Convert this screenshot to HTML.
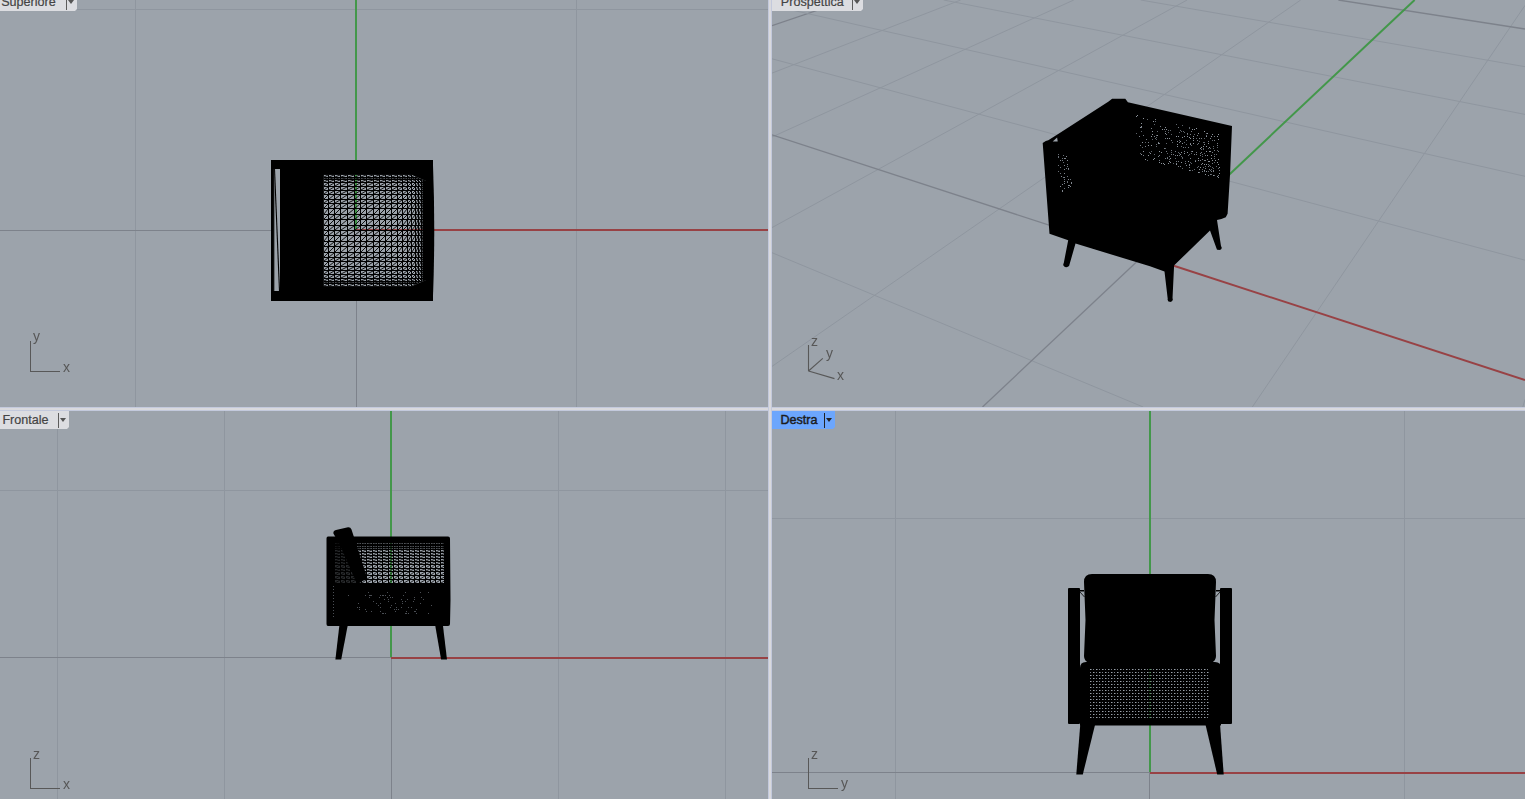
<!DOCTYPE html>
<html><head><meta charset="utf-8"><style>
html,body{margin:0;padding:0}
body{width:1525px;height:799px;position:relative;overflow:hidden;background:#d9d9dd;font-family:"Liberation Sans",sans-serif}
svg{position:absolute;left:0;top:0}
.lab{position:absolute;height:18px;box-sizing:border-box;background:#dcdde1;color:#444;font-size:12.6px;line-height:19px;white-space:nowrap;-webkit-text-stroke:0.2px #444;clip-path:polygon(0 0,100% 0,100% calc(100% - 2px),calc(100% - 2px) 100%,0 100%)}
.lab.act{background:#6ca6fd;color:#1c1c1c;-webkit-text-stroke:0.45px #1c1c1c;font-size:12.6px;line-height:19px}
.sp{position:absolute;top:2px;width:1px;height:15px;background:#5c5c5c}
.tri{position:absolute;top:7px;width:0;height:0;border-left:3.5px solid transparent;border-right:3.5px solid transparent;border-top:4px solid #555}
.act .sp{background:#222}
.act .tri{border-top-color:#222}
.ax{position:absolute;font-size:14px;line-height:14px;color:#575757;will-change:transform}
</style></head><body>
<svg width="1525" height="799">
<defs>
<clipPath id="cpP"><rect x="772" y="0" width="753" height="407"/></clipPath>
<clipPath id="cpTop"><path d="M323.5,174.5 L411,174.5 L426,181 L426,280 L411,286.5 L323.5,286.5 Z"/></clipPath>
<clipPath id="cpFront"><rect x="334" y="543" width="110" height="41"/></clipPath>
<pattern id="meshDots" x="0" y="0" width="3" height="3" patternUnits="userSpaceOnUse">
 <rect width="3" height="3" fill="#000"/><rect x="1" y="1" width="1" height="1" fill="#8c929a"/>
</pattern>
<pattern id="meshDots2" x="1089" y="668" width="6" height="6" patternUnits="userSpaceOnUse">
 <rect width="6" height="6" fill="#000"/><rect x="1" y="1" width="1" height="1" fill="#9ca3ab"/><rect x="4" y="1" width="1" height="1" fill="#7a8088"/><rect x="1" y="4" width="1" height="1" fill="#7a8088"/><rect x="4" y="4" width="1" height="1" fill="#9ca3ab"/><rect x="2" y="1" width="1" height="1" fill="#50545a"/><rect x="5" y="4" width="1" height="1" fill="#50545a"/>
</pattern>
<pattern id="meshDots4" x="0" y="0" width="4" height="4" patternUnits="userSpaceOnUse">
 <rect width="4" height="4" fill="#000"/><rect x="1" y="1" width="1" height="1" fill="#80868e"/>
</pattern>
<pattern id="meshDots3" x="0" y="0" width="6" height="5" patternUnits="userSpaceOnUse">
 <rect width="6" height="5" fill="#000"/><rect x="2" y="2" width="1" height="1" fill="#5a5f66"/>
</pattern>
</defs>
<rect x="0" y="0" width="768" height="407" fill="#9ca3ab"/>
<rect x="772" y="0" width="753" height="407" fill="#9ca3ab"/>
<rect x="0" y="411" width="768" height="388" fill="#9ca3ab"/>
<rect x="772" y="411" width="753" height="388" fill="#9ca3ab"/>
<rect x="768" y="0" width="1" height="799" fill="#c3c9dc"/>
<rect x="771" y="0" width="1" height="799" fill="#c3c9dc"/>
<rect x="0" y="407" width="1525" height="1" fill="#c3c9dc"/>
<rect x="0" y="410" width="1525" height="1" fill="#c3c9dc"/>
<rect x="769" y="407" width="2" height="4" fill="#d9d9dd"/>
<rect x="135" y="0" width="1" height="407" fill="#8f969f"/>
<rect x="576" y="0" width="1" height="407" fill="#8f969f"/>
<rect x="0" y="9" width="768" height="1" fill="#8f969f"/>
<rect x="0" y="230" width="356" height="1" fill="#7d828b"/>
<rect x="356" y="230" width="1" height="177" fill="#7d828b"/>
<rect x="356" y="229" width="412" height="2" fill="#984245"/>
<rect x="355" y="0" width="2" height="230" fill="#43974a"/>
<rect x="57" y="411" width="1" height="388" fill="#8f969f"/>
<rect x="224" y="411" width="1" height="388" fill="#8f969f"/>
<rect x="558" y="411" width="1" height="388" fill="#8f969f"/>
<rect x="725" y="411" width="1" height="388" fill="#8f969f"/>
<rect x="0" y="490" width="768" height="1" fill="#8f969f"/>
<rect x="0" y="657" width="391" height="1" fill="#7d828b"/>
<rect x="391" y="657" width="1" height="142" fill="#7d828b"/>
<rect x="391" y="657" width="377" height="2" fill="#984245"/>
<rect x="390" y="411" width="2" height="246" fill="#43974a"/>
<rect x="895" y="411" width="1" height="388" fill="#8f969f"/>
<rect x="1404" y="411" width="1" height="388" fill="#8f969f"/>
<rect x="772" y="518" width="753" height="1" fill="#8f969f"/>
<rect x="772" y="772" width="378" height="1" fill="#7d828b"/>
<rect x="1149" y="772" width="1" height="27" fill="#7d828b"/>
<rect x="1150" y="772" width="375" height="2" fill="#984245"/>
<rect x="1149" y="411" width="2" height="361" fill="#43974a"/>
<g clip-path="url(#cpP)">
<line x1="772.0" y1="25.7" x2="847.9" y2="0.0" stroke="#7d828b" stroke-width="1.3"/>
<line x1="772.0" y1="73.1" x2="960.7" y2="0.0" stroke="#8f969f" stroke-width="1"/>
<line x1="772.0" y1="137.0" x2="1073.8" y2="0.0" stroke="#8f969f" stroke-width="1"/>
<line x1="772.0" y1="227.6" x2="1187.1" y2="0.0" stroke="#8f969f" stroke-width="1"/>
<line x1="772.0" y1="366.4" x2="1300.7" y2="0.0" stroke="#8f969f" stroke-width="1"/>
<line x1="772.0" y1="252.7" x2="1143.2" y2="407.0" stroke="#8f969f" stroke-width="1"/>
<line x1="1252.3" y1="407.0" x2="1525.0" y2="5.4" stroke="#8f969f" stroke-width="1"/>
<line x1="772.0" y1="58.8" x2="1525.0" y2="260.2" stroke="#8f969f" stroke-width="1"/>
<line x1="1522.8" y1="407.0" x2="1525.0" y2="399.5" stroke="#8f969f" stroke-width="1"/>
<line x1="772.0" y1="5.5" x2="1525.0" y2="176.3" stroke="#8f969f" stroke-width="1"/>
<line x1="943.7" y1="0.0" x2="1525.0" y2="114.4" stroke="#8f969f" stroke-width="1"/>
<line x1="1140.7" y1="0.0" x2="1525.0" y2="66.7" stroke="#8f969f" stroke-width="1"/>
<line x1="1338.4" y1="-0.0" x2="1525.0" y2="29.0" stroke="#7d828b" stroke-width="1.3"/>
<line x1="1143.1" y1="255.7" x2="772.0" y2="134.9" stroke="#7d828b" stroke-width="1.3"/>
<line x1="1143.1" y1="255.7" x2="982.5" y2="407.0" stroke="#7d828b" stroke-width="1.3"/>
<line x1="1143.1" y1="255.7" x2="1525.0" y2="380.1" stroke="#984245" stroke-width="2"/>
<line x1="1143.1" y1="255.7" x2="1414.6" y2="0.0" stroke="#43974a" stroke-width="2"/>
</g>
<rect x="271" y="160" width="162" height="141" fill="#000"/>
<rect x="274" y="169" width="6" height="122" fill="#9ca3ab"/>
<path d="M274.5,169 L279.5,291" stroke="#000" stroke-width="1.1"/>
<rect x="273.6" y="169" width="0.8" height="122" fill="#222"/>
<path d="M433,165 Q435.5,230 433,296 Z" fill="#000"/>
<g clip-path="url(#cpTop)">
<rect x="323.5" y="174.8" width="102.5" height="111.5" fill="#9ca3ab"/>
<rect x="355" y="174.8" width="2" height="55.2" fill="#43974a"/>
<rect x="356" y="229" width="70" height="2" fill="#984245"/>
<path d="M323,174h1V287h-1zM328,174h1V287h-1zM334,174h1V287h-1zM340,174h1V287h-1zM347,174h1V287h-1zM354,174h1V287h-1zM360,174h1V287h-1zM366,174h1V287h-1zM373,174h1V287h-1zM379,174h1V287h-1zM385,174h1V287h-1zM391,174h1V287h-1zM397,174h1V287h-1zM402,174h1V287h-1zM407,174h1V287h-1zM411,174h1V287h-1zM415,174h1V287h-1zM418,174h1V287h-1zM421,174h1V287h-1zM423,174h1V287h-1zM424,174h1V287h-1zM425,174h1V287h-1zM426,174h1V287h-1zM323,174H427v1H323zM323,177H427v1H323zM323,179H427v1H323zM323,182H427v1H323zM323,186H427v1H323zM323,190H427v1H323zM323,194H427v1H323zM323,199H427v1H323zM323,203H427v1H323zM323,208H427v1H323zM323,214H427v1H323zM323,219H427v1H323zM323,225H427v1H323zM323,230H427v1H323zM323,235H427v1H323zM323,241H427v1H323zM323,246H427v1H323zM323,252H427v1H323zM323,257H427v1H323zM323,261H427v1H323zM323,266H427v1H323zM323,270H427v1H323zM323,274H427v1H323zM323,278H427v1H323zM323,281H427v1H323zM323,283H427v1H323zM323,286H427v1H323z" fill="#000" shape-rendering="crispEdges"/>
<path d="M324,177L328,175M324,179L328,178M324,182L328,180M324,186L328,183M324,190L328,187M324,194L328,191M324,199L328,195M324,203L328,200M324,208L328,204M324,214L328,209M324,219L328,215M324,225L328,220M324,230L328,226M324,235L328,231M324,241L328,236M324,246L328,242M324,252L328,247M324,257L328,253M324,261L328,258M324,266L328,262M324,270L328,267M324,274L328,271M324,278L328,275M324,281L328,279M324,283L328,282M324,286L328,284M329,177L334,175M329,179L334,178M329,182L334,180M329,186L334,183M329,190L334,187M329,194L334,191M329,199L334,195M329,203L334,200M329,208L334,204M329,214L334,209M329,219L334,215M329,225L334,220M329,230L334,226M329,235L334,231M329,241L334,236M329,246L334,242M329,252L334,247M329,257L334,253M329,261L334,258M329,266L334,262M329,270L334,267M329,274L334,271M329,278L334,275M329,281L334,279M329,283L334,282M329,286L334,284M335,177L340,175M335,179L340,178M335,182L340,180M335,186L340,183M335,190L340,187M335,194L340,191M335,199L340,195M335,203L340,200M335,208L340,204M335,214L340,209M335,219L340,215M335,225L340,220M335,230L340,226M335,235L340,231M335,241L340,236M335,246L340,242M335,252L340,247M335,257L340,253M335,261L340,258M335,266L340,262M335,270L340,267M335,274L340,271M335,278L340,275M335,281L340,279M335,283L340,282M335,286L340,284M341,177L347,175M341,179L347,178M341,182L347,180M341,186L347,183M341,190L347,187M341,194L347,191M341,199L347,195M341,203L347,200M341,208L347,204M341,214L347,209M341,219L347,215M341,225L347,220M341,230L347,226M341,235L347,231M341,241L347,236M341,246L347,242M341,252L347,247M341,257L347,253M341,261L347,258M341,266L347,262M341,270L347,267M341,274L347,271M341,278L347,275M341,281L347,279M341,283L347,282M341,286L347,284M348,177L354,175M348,179L354,178M348,182L354,180M348,186L354,183M348,190L354,187M348,194L354,191M348,199L354,195M348,203L354,200M348,208L354,204M348,214L354,209M348,219L354,215M348,225L354,220M348,230L354,226M348,235L354,231M348,241L354,236M348,246L354,242M348,252L354,247M348,257L354,253M348,261L354,258M348,266L354,262M348,270L354,267M348,274L354,271M348,278L354,275M348,281L354,279M348,283L354,282M348,286L354,284M355,177L360,175M355,179L360,178M355,182L360,180M355,186L360,183M355,190L360,187M355,194L360,191M355,199L360,195M355,203L360,200M355,208L360,204M355,214L360,209M355,219L360,215M355,225L360,220M355,230L360,226M355,235L360,231M355,241L360,236M355,246L360,242M355,252L360,247M355,257L360,253M355,261L360,258M355,266L360,262M355,270L360,267M355,274L360,271M355,278L360,275M355,281L360,279M355,283L360,282M355,286L360,284M361,177L366,175M361,179L366,178M361,182L366,180M361,186L366,183M361,190L366,187M361,194L366,191M361,199L366,195M361,203L366,200M361,208L366,204M361,214L366,209M361,219L366,215M361,225L366,220M361,230L366,226M361,235L366,231M361,241L366,236M361,246L366,242M361,252L366,247M361,257L366,253M361,261L366,258M361,266L366,262M361,270L366,267M361,274L366,271M361,278L366,275M361,281L366,279M361,283L366,282M361,286L366,284M367,177L373,175M367,179L373,178M367,182L373,180M367,186L373,183M367,190L373,187M367,194L373,191M367,199L373,195M367,203L373,200M367,208L373,204M367,214L373,209M367,219L373,215M367,225L373,220M367,230L373,226M367,235L373,231M367,241L373,236M367,246L373,242M367,252L373,247M367,257L373,253M367,261L373,258M367,266L373,262M367,270L373,267M367,274L373,271M367,278L373,275M367,281L373,279M367,283L373,282M367,286L373,284M374,177L379,175M374,179L379,178M374,182L379,180M374,186L379,183M374,190L379,187M374,194L379,191M374,199L379,195M374,203L379,200M374,208L379,204M374,214L379,209M374,219L379,215M374,225L379,220M374,230L379,226M374,235L379,231M374,241L379,236M374,246L379,242M374,252L379,247M374,257L379,253M374,261L379,258M374,266L379,262M374,270L379,267M374,274L379,271M374,278L379,275M374,281L379,279M374,283L379,282M374,286L379,284M380,177L385,175M380,179L385,178M380,182L385,180M380,186L385,183M380,190L385,187M380,194L385,191M380,199L385,195M380,203L385,200M380,208L385,204M380,214L385,209M380,219L385,215M380,225L385,220M380,230L385,226M380,235L385,231M380,241L385,236M380,246L385,242M380,252L385,247M380,257L385,253M380,261L385,258M380,266L385,262M380,270L385,267M380,274L385,271M380,278L385,275M380,281L385,279M380,283L385,282M380,286L385,284M386,177L391,175M386,179L391,178M386,182L391,180M386,186L391,183M386,190L391,187M386,194L391,191M386,199L391,195M386,203L391,200M386,208L391,204M386,214L391,209M386,219L391,215M386,225L391,220M386,230L391,226M386,235L391,231M386,241L391,236M386,246L391,242M386,252L391,247M386,257L391,253M386,261L391,258M386,266L391,262M386,270L391,267M386,274L391,271M386,278L391,275M386,281L391,279M386,283L391,282M386,286L391,284M392,177L397,175M392,179L397,178M392,182L397,180M392,186L397,183M392,190L397,187M392,194L397,191M392,199L397,195M392,203L397,200M392,208L397,204M392,214L397,209M392,219L397,215M392,225L397,220M392,230L397,226M392,235L397,231M392,241L397,236M392,246L397,242M392,252L397,247M392,257L397,253M392,261L397,258M392,266L397,262M392,270L397,267M392,274L397,271M392,278L397,275M392,281L397,279M392,283L397,282M392,286L397,284M398,177L402,175M398,179L402,178M398,182L402,180M398,186L402,183M398,190L402,187M398,194L402,191M398,199L402,195M398,203L402,200M398,208L402,204M398,214L402,209M398,219L402,215M398,225L402,220M398,230L402,226M398,235L402,231M398,241L402,236M398,246L402,242M398,252L402,247M398,257L402,253M398,261L402,258M398,266L402,262M398,270L402,267M398,274L402,271M398,278L402,275M398,281L402,279M398,283L402,282M398,286L402,284M403,177L407,175M403,179L407,178M403,182L407,180M403,186L407,183M403,190L407,187M403,194L407,191M403,199L407,195M403,203L407,200M403,208L407,204M403,214L407,209M403,219L407,215M403,225L407,220M403,230L407,226M403,235L407,231M403,241L407,236M403,246L407,242M403,252L407,247M403,257L407,253M403,261L407,258M403,266L407,262M403,270L407,267M403,274L407,271M403,278L407,275M403,281L407,279M403,283L407,282M403,286L407,284M408,177L411,175M408,179L411,178M408,182L411,180M408,186L411,183M408,190L411,187M408,194L411,191M408,199L411,195M408,203L411,200M408,208L411,204M408,214L411,209M408,219L411,215M408,225L411,220M408,230L411,226M408,235L411,231M408,241L411,236M408,246L411,242M408,252L411,247M408,257L411,253M408,261L411,258M408,266L411,262M408,270L411,267M408,274L411,271M408,278L411,275M408,281L411,279M408,283L411,282M408,286L411,284M412,177L415,175M412,179L415,178M412,182L415,180M412,186L415,183M412,190L415,187M412,194L415,191M412,199L415,195M412,203L415,200M412,208L415,204M412,214L415,209M412,219L415,215M412,225L415,220M412,230L415,226M412,235L415,231M412,241L415,236M412,246L415,242M412,252L415,247M412,257L415,253M412,261L415,258M412,266L415,262M412,270L415,267M412,274L415,271M412,278L415,275M412,281L415,279M412,283L415,282M412,286L415,284M416,177L418,175M416,179L418,178M416,182L418,180M416,186L418,183M416,190L418,187M416,194L418,191M416,199L418,195M416,203L418,200M416,208L418,204M416,214L418,209M416,219L418,215M416,225L418,220M416,230L418,226M416,235L418,231M416,241L418,236M416,246L418,242M416,252L418,247M416,257L418,253M416,261L418,258M416,266L418,262M416,270L418,267M416,274L418,271M416,278L418,275M416,281L418,279M416,283L418,282M416,286L418,284M419,177L421,175M419,179L421,178M419,182L421,180M419,186L421,183M419,190L421,187M419,194L421,191M419,199L421,195M419,203L421,200M419,208L421,204M419,214L421,209M419,219L421,215M419,225L421,220M419,230L421,226M419,235L421,231M419,241L421,236M419,246L421,242M419,252L421,247M419,257L421,253M419,261L421,258M419,266L421,262M419,270L421,267M419,274L421,271M419,278L421,275M419,281L421,279M419,283L421,282M419,286L421,284M422,177L423,175M422,179L423,178M422,182L423,180M422,186L423,183M422,190L423,187M422,194L423,191M422,199L423,195M422,203L423,200M422,208L423,204M422,214L423,209M422,219L423,215M422,225L423,220M422,230L423,226M422,235L423,231M422,241L423,236M422,246L423,242M422,252L423,247M422,257L423,253M422,261L423,258M422,266L423,262M422,270L423,267M422,274L423,271M422,278L423,275M422,281L423,279M422,283L423,282M422,286L423,284M424,177L424,175M424,179L424,178M424,182L424,180M424,186L424,183M424,190L424,187M424,194L424,191M424,199L424,195M424,203L424,200M424,208L424,204M424,214L424,209M424,219L424,215M424,225L424,220M424,230L424,226M424,235L424,231M424,241L424,236M424,246L424,242M424,252L424,247M424,257L424,253M424,261L424,258M424,266L424,262M424,270L424,267M424,274L424,271M424,278L424,275M424,281L424,279M424,283L424,282M424,286L424,284M425,177L425,175M425,179L425,178M425,182L425,180M425,186L425,183M425,190L425,187M425,194L425,191M425,199L425,195M425,203L425,200M425,208L425,204M425,214L425,209M425,219L425,215M425,225L425,220M425,230L425,226M425,235L425,231M425,241L425,236M425,246L425,242M425,252L425,247M425,257L425,253M425,261L425,258M425,266L425,262M425,270L425,267M425,274L425,271M425,278L425,275M425,281L425,279M425,283L425,282M425,286L425,284M426,177L426,175M426,179L426,178M426,182L426,180M426,186L426,183M426,190L426,187M426,194L426,191M426,199L426,195M426,203L426,200M426,208L426,204M426,214L426,209M426,219L426,215M426,225L426,220M426,230L426,226M426,235L426,231M426,241L426,236M426,246L426,242M426,252L426,247M426,257L426,253M426,261L426,258M426,266L426,262M426,270L426,267M426,274L426,271M426,278L426,275M426,281L426,279M426,283L426,282M426,286L426,284" stroke="#000" stroke-width="0.9" fill="none"/>
</g>
<polygon points="1042.7,143.1 1045.8,141 1048.3,140.3 1061.3,132.1 1108.6,101.4 1112.1,98.8 1125.3,98.8 1127.9,102.3 1232,126 1230,175 1227.6,213.8 1225.8,217.3 1221.4,219 1217,220 1221.4,248.8 1217,249.7 1210,230.4 1175,264.6 1174.1,265.4 1172.4,300.5 1168,301.3 1164.5,271.6 1150,266.3 1075.5,243.5 1069,266.3 1063.3,265.4 1068.2,240.2 1049.5,233.7" fill="#000"/>
<circle cx="1170.2" cy="299.6" r="2.4" fill="#000"/><circle cx="1219.3" cy="247.8" r="2.3" fill="#000"/><circle cx="1066.2" cy="264.6" r="2.6" fill="#000"/>
<polygon points="1052.7,141.6 1057.1,137.5 1057.7,141.6" fill="#9ca3ab"/>
<path d="M1136,133h1v1h-1zM1140,153h1v1h-1zM1142,147h1v1h-1zM1141,131h1v1h-1zM1147,160h1v1h-1zM1145,142h1v1h-1zM1149,152h1v1h-1zM1151,151h1v1h-1zM1147,119h1v1h-1zM1152,139h1v1h-1zM1154,154h1v1h-1zM1155,138h1v1h-1zM1156,144h1v1h-1zM1156,146h1v1h-1zM1154,124h1v1h-1zM1156,135h1v1h-1zM1156,137h1v1h-1zM1156,139h1v1h-1zM1155,121h1v1h-1zM1157,131h1v1h-1zM1165,148h1v1h-1zM1167,157h1v1h-1zM1165,131h1v1h-1zM1166,143h1v1h-1zM1167,153h1v1h-1zM1169,159h1v1h-1zM1169,156h1v1h-1zM1168,130h1v1h-1zM1168,132h1v1h-1zM1171,152h1v1h-1zM1173,163h1v1h-1zM1170,130h1v1h-1zM1171,134h1v1h-1zM1172,142h1v1h-1zM1175,158h1v1h-1zM1178,152h1v1h-1zM1179,153h1v1h-1zM1179,155h1v1h-1zM1176,124h1v1h-1zM1179,140h1v1h-1zM1181,156h1v1h-1zM1182,168h1v1h-1zM1180,130h1v1h-1zM1179,132h1v1h-1zM1181,146h1v1h-1zM1182,157h1v1h-1zM1182,158h1v1h-1zM1181,131h1v1h-1zM1185,161h1v1h-1zM1182,125h1v1h-1zM1183,131h1v1h-1zM1184,142h1v1h-1zM1185,147h1v1h-1zM1184,132h1v1h-1zM1186,140h1v1h-1zM1186,144h1v1h-1zM1188,155h1v1h-1zM1187,134h1v1h-1zM1189,154h1v1h-1zM1190,162h1v1h-1zM1190,170h1v1h-1zM1189,127h1v1h-1zM1189,128h1v1h-1zM1191,151h1v1h-1zM1191,153h1v1h-1zM1191,163h1v1h-1zM1192,170h1v1h-1zM1191,145h1v1h-1zM1194,169h1v1h-1zM1195,160h1v1h-1zM1194,134h1v1h-1zM1197,167h1v1h-1zM1196,138h1v1h-1zM1197,144h1v1h-1zM1198,166h1v1h-1zM1199,141h1v1h-1zM1201,149h1v1h-1zM1202,154h1v1h-1zM1202,156h1v1h-1zM1203,167h1v1h-1zM1202,169h1v1h-1zM1203,142h1v1h-1zM1203,148h1v1h-1zM1203,149h1v1h-1zM1204,153h1v1h-1zM1204,171h1v1h-1zM1204,138h1v1h-1zM1204,142h1v1h-1zM1205,166h1v1h-1zM1206,133h1v1h-1zM1206,135h1v1h-1zM1208,164h1v1h-1zM1208,171h1v1h-1zM1208,148h1v1h-1zM1209,165h1v1h-1zM1210,166h1v1h-1zM1210,170h1v1h-1zM1210,148h1v1h-1zM1212,167h1v1h-1zM1211,169h1v1h-1zM1211,174h1v1h-1zM1212,140h1v1h-1zM1213,146h1v1h-1zM1213,148h1v1h-1zM1213,168h1v1h-1zM1214,154h1v1h-1zM1214,158h1v1h-1zM1214,162h1v1h-1zM1214,175h1v1h-1zM1216,154h1v1h-1zM1216,166h1v1h-1zM1217,147h1v1h-1zM1217,150h1v1h-1zM1218,168h1v1h-1z" fill="#5e646b" shape-rendering="crispEdges"/>
<path d="M1141,154h1v1h-1zM1136,116h1v1h-1zM1142,142h1v1h-1zM1143,151h1v1h-1zM1145,159h1v1h-1zM1137,115h1v1h-1zM1140,127h1v1h-1zM1141,123h1v1h-1zM1141,126h1v1h-1zM1148,155h1v1h-1zM1143,118h1v1h-1zM1148,145h1v1h-1zM1150,153h1v1h-1zM1151,145h1v1h-1zM1153,159h1v1h-1zM1151,136h1v1h-1zM1154,158h1v1h-1zM1152,131h1v1h-1zM1152,134h1v1h-1zM1159,162h1v1h-1zM1153,121h1v1h-1zM1158,143h1v1h-1zM1159,151h1v1h-1zM1161,163h1v1h-1zM1157,135h1v1h-1zM1161,152h1v1h-1zM1163,163h1v1h-1zM1164,164h1v1h-1zM1162,129h1v1h-1zM1168,163h1v1h-1zM1165,133h1v1h-1zM1169,161h1v1h-1zM1165,127h1v1h-1zM1166,129h1v1h-1zM1167,138h1v1h-1zM1170,158h1v1h-1zM1170,162h1v1h-1zM1169,138h1v1h-1zM1176,164h1v1h-1zM1177,155h1v1h-1zM1176,136h1v1h-1zM1177,141h1v1h-1zM1177,144h1v1h-1zM1177,146h1v1h-1zM1178,136h1v1h-1zM1180,154h1v1h-1zM1181,162h1v1h-1zM1180,141h1v1h-1zM1181,152h1v1h-1zM1182,137h1v1h-1zM1182,143h1v1h-1zM1184,153h1v1h-1zM1184,136h1v1h-1zM1187,152h1v1h-1zM1188,161h1v1h-1zM1189,170h1v1h-1zM1187,136h1v1h-1zM1189,137h1v1h-1zM1190,138h1v1h-1zM1190,144h1v1h-1zM1192,151h1v1h-1zM1192,129h1v1h-1zM1193,136h1v1h-1zM1193,138h1v1h-1zM1193,140h1v1h-1zM1193,143h1v1h-1zM1195,161h1v1h-1zM1194,129h1v1h-1zM1198,172h1v1h-1zM1196,128h1v1h-1zM1198,158h1v1h-1zM1198,160h1v1h-1zM1199,169h1v1h-1zM1198,133h1v1h-1zM1200,148h1v1h-1zM1200,167h1v1h-1zM1201,147h1v1h-1zM1202,163h1v1h-1zM1203,146h1v1h-1zM1204,164h1v1h-1zM1204,170h1v1h-1zM1205,174h1v1h-1zM1204,131h1v1h-1zM1204,144h1v1h-1zM1206,164h1v1h-1zM1206,171h1v1h-1zM1206,136h1v1h-1zM1206,146h1v1h-1zM1206,151h1v1h-1zM1207,155h1v1h-1zM1208,161h1v1h-1zM1207,133h1v1h-1zM1208,143h1v1h-1zM1209,147h1v1h-1zM1209,151h1v1h-1zM1209,161h1v1h-1zM1210,151h1v1h-1zM1211,155h1v1h-1zM1211,158h1v1h-1zM1212,134h1v1h-1zM1211,136h1v1h-1zM1212,160h1v1h-1zM1213,175h1v1h-1zM1215,160h1v1h-1zM1217,162h1v1h-1zM1217,176h1v1h-1zM1218,134h1v1h-1zM1217,136h1v1h-1zM1218,139h1v1h-1zM1218,159h1v1h-1zM1218,164h1v1h-1zM1219,167h1v1h-1zM1219,173h1v1h-1zM1218,177h1v1h-1z" fill="#8c939b" shape-rendering="crispEdges"/>
<path d="M1139,136h1v1h-1zM1140,145h1v1h-1zM1143,155h1v1h-1zM1141,127h1v1h-1zM1143,135h1v1h-1zM1145,146h1v1h-1zM1146,139h1v1h-1zM1148,142h1v1h-1zM1151,128h1v1h-1zM1154,136h1v1h-1zM1158,156h1v1h-1zM1159,160h1v1h-1zM1159,155h1v1h-1zM1155,119h1v1h-1zM1158,142h1v1h-1zM1159,143h1v1h-1zM1160,126h1v1h-1zM1164,148h1v1h-1zM1165,158h1v1h-1zM1166,151h1v1h-1zM1167,158h1v1h-1zM1164,129h1v1h-1zM1165,138h1v1h-1zM1166,134h1v1h-1zM1171,150h1v1h-1zM1171,154h1v1h-1zM1171,140h1v1h-1zM1173,154h1v1h-1zM1175,151h1v1h-1zM1175,155h1v1h-1zM1176,161h1v1h-1zM1176,163h1v1h-1zM1178,161h1v1h-1zM1178,166h1v1h-1zM1180,166h1v1h-1zM1179,142h1v1h-1zM1178,127h1v1h-1zM1183,147h1v1h-1zM1184,151h1v1h-1zM1185,163h1v1h-1zM1186,165h1v1h-1zM1189,164h1v1h-1zM1189,165h1v1h-1zM1189,167h1v1h-1zM1187,133h1v1h-1zM1188,147h1v1h-1zM1190,158h1v1h-1zM1190,143h1v1h-1zM1191,131h1v1h-1zM1190,134h1v1h-1zM1194,154h1v1h-1zM1196,152h1v1h-1zM1196,154h1v1h-1zM1197,135h1v1h-1zM1197,140h1v1h-1zM1199,172h1v1h-1zM1199,138h1v1h-1zM1198,143h1v1h-1zM1200,153h1v1h-1zM1200,155h1v1h-1zM1200,160h1v1h-1zM1201,164h1v1h-1zM1201,138h1v1h-1zM1201,152h1v1h-1zM1202,159h1v1h-1zM1202,171h1v1h-1zM1204,160h1v1h-1zM1205,155h1v1h-1zM1205,160h1v1h-1zM1205,168h1v1h-1zM1207,159h1v1h-1zM1208,166h1v1h-1zM1208,175h1v1h-1zM1208,141h1v1h-1zM1209,169h1v1h-1zM1210,174h1v1h-1zM1210,138h1v1h-1zM1212,163h1v1h-1zM1211,171h1v1h-1zM1212,152h1v1h-1zM1213,170h1v1h-1zM1213,171h1v1h-1zM1214,136h1v1h-1zM1214,140h1v1h-1zM1214,150h1v1h-1zM1214,156h1v1h-1zM1217,143h1v1h-1zM1217,145h1v1h-1zM1218,151h1v1h-1zM1219,170h1v1h-1zM1218,175h1v1h-1z" fill="#767c84" shape-rendering="crispEdges"/>
<path d="M1058,165h1v1h-1zM1058,171h1v1h-1zM1058,154h1v1h-1zM1058,156h1v1h-1zM1058,157h1v1h-1zM1060,167h1v1h-1zM1060,173h1v1h-1zM1063,177h1v1h-1zM1064,188h1v1h-1zM1062,158h1v1h-1zM1062,160h1v1h-1zM1064,179h1v1h-1zM1063,155h1v1h-1zM1063,162h1v1h-1zM1067,181h1v1h-1zM1067,182h1v1h-1zM1066,168h1v1h-1zM1067,176h1v1h-1zM1067,166h1v1h-1zM1068,169h1v1h-1zM1070,179h1v1h-1z" fill="#6a7078" shape-rendering="crispEdges"/>
<path d="M1060,186h1v1h-1zM1061,176h1v1h-1zM1062,184h1v1h-1zM1062,190h1v1h-1zM1062,191h1v1h-1zM1060,160h1v1h-1zM1064,183h1v1h-1zM1064,173h1v1h-1zM1064,177h1v1h-1zM1064,181h1v1h-1zM1064,158h1v1h-1zM1064,165h1v1h-1zM1064,169h1v1h-1zM1068,185h1v1h-1zM1068,187h1v1h-1zM1065,158h1v1h-1zM1068,179h1v1h-1zM1069,185h1v1h-1zM1070,186h1v1h-1zM1066,156h1v1h-1zM1067,160h1v1h-1zM1067,164h1v1h-1zM1068,168h1v1h-1zM1071,182h1v1h-1zM1071,183h1v1h-1z" fill="#80868e" shape-rendering="crispEdges"/>
<path d="M328,536.5 L448,536.5 Q450,536.5 450,538.5 L450.5,600 L450,624 Q450,626 448,626 L328,626 Q326.5,626 326.5,624 L326.5,538.5 Q326.5,536.5 328,536.5 Z" fill="#000"/>
<g clip-path="url(#cpFront)">
<rect x="334" y="543" width="110" height="41" fill="#9ca3ab"/>
<rect x="390" y="543" width="2" height="41" fill="#43974a"/>
<path d="M334,543h1V584h-1zM340,543h1V584h-1zM345,543h1V584h-1zM350,543h1V584h-1zM356,543h1V584h-1zM361,543h1V584h-1zM366,543h1V584h-1zM372,543h1V584h-1zM377,543h1V584h-1zM382,543h1V584h-1zM388,543h1V584h-1zM393,543h1V584h-1zM398,543h1V584h-1zM403,543h1V584h-1zM409,543h1V584h-1zM414,543h1V584h-1zM419,543h1V584h-1zM425,543h1V584h-1zM430,543h1V584h-1zM435,543h1V584h-1zM440,543h1V584h-1zM446,543h1V584h-1zM334,542H444v1H334zM334,544H444v1H334zM334,545H444v1H334zM334,547H444v1H334zM334,549H444v1H334zM334,552H444v1H334zM334,555H444v1H334zM334,558H444v1H334zM334,561H444v1H334zM334,564H444v1H334zM334,568H444v1H334zM334,571H444v1H334zM334,575H444v1H334zM334,579H444v1H334zM334,583H444v1H334z" fill="#000" shape-rendering="crispEdges"/>
<path d="M335,544L340,543M335,545L340,545M335,547L340,546M335,549L340,548M335,552L340,550M335,555L340,553M335,558L340,556M335,561L340,559M335,564L340,562M335,568L340,565M335,571L340,569M335,575L340,572M335,579L340,576M335,583L340,580M341,544L345,543M341,545L345,545M341,547L345,546M341,549L345,548M341,552L345,550M341,555L345,553M341,558L345,556M341,561L345,559M341,564L345,562M341,568L345,565M341,571L345,569M341,575L345,572M341,579L345,576M341,583L345,580M346,544L350,543M346,545L350,545M346,547L350,546M346,549L350,548M346,552L350,550M346,555L350,553M346,558L350,556M346,561L350,559M346,564L350,562M346,568L350,565M346,571L350,569M346,575L350,572M346,579L350,576M346,583L350,580M351,544L356,543M351,545L356,545M351,547L356,546M351,549L356,548M351,552L356,550M351,555L356,553M351,558L356,556M351,561L356,559M351,564L356,562M351,568L356,565M351,571L356,569M351,575L356,572M351,579L356,576M351,583L356,580M357,544L361,543M357,545L361,545M357,547L361,546M357,549L361,548M357,552L361,550M357,555L361,553M357,558L361,556M357,561L361,559M357,564L361,562M357,568L361,565M357,571L361,569M357,575L361,572M357,579L361,576M357,583L361,580M362,544L366,543M362,545L366,545M362,547L366,546M362,549L366,548M362,552L366,550M362,555L366,553M362,558L366,556M362,561L366,559M362,564L366,562M362,568L366,565M362,571L366,569M362,575L366,572M362,579L366,576M362,583L366,580M367,544L372,543M367,545L372,545M367,547L372,546M367,549L372,548M367,552L372,550M367,555L372,553M367,558L372,556M367,561L372,559M367,564L372,562M367,568L372,565M367,571L372,569M367,575L372,572M367,579L372,576M367,583L372,580M373,544L377,543M373,545L377,545M373,547L377,546M373,549L377,548M373,552L377,550M373,555L377,553M373,558L377,556M373,561L377,559M373,564L377,562M373,568L377,565M373,571L377,569M373,575L377,572M373,579L377,576M373,583L377,580M378,544L382,543M378,545L382,545M378,547L382,546M378,549L382,548M378,552L382,550M378,555L382,553M378,558L382,556M378,561L382,559M378,564L382,562M378,568L382,565M378,571L382,569M378,575L382,572M378,579L382,576M378,583L382,580M383,544L388,543M383,545L388,545M383,547L388,546M383,549L388,548M383,552L388,550M383,555L388,553M383,558L388,556M383,561L388,559M383,564L388,562M383,568L388,565M383,571L388,569M383,575L388,572M383,579L388,576M383,583L388,580M389,544L393,543M389,545L393,545M389,547L393,546M389,549L393,548M389,552L393,550M389,555L393,553M389,558L393,556M389,561L393,559M389,564L393,562M389,568L393,565M389,571L393,569M389,575L393,572M389,579L393,576M389,583L393,580M394,544L398,543M394,545L398,545M394,547L398,546M394,549L398,548M394,552L398,550M394,555L398,553M394,558L398,556M394,561L398,559M394,564L398,562M394,568L398,565M394,571L398,569M394,575L398,572M394,579L398,576M394,583L398,580M399,544L403,543M399,545L403,545M399,547L403,546M399,549L403,548M399,552L403,550M399,555L403,553M399,558L403,556M399,561L403,559M399,564L403,562M399,568L403,565M399,571L403,569M399,575L403,572M399,579L403,576M399,583L403,580M404,544L409,543M404,545L409,545M404,547L409,546M404,549L409,548M404,552L409,550M404,555L409,553M404,558L409,556M404,561L409,559M404,564L409,562M404,568L409,565M404,571L409,569M404,575L409,572M404,579L409,576M404,583L409,580M410,544L414,543M410,545L414,545M410,547L414,546M410,549L414,548M410,552L414,550M410,555L414,553M410,558L414,556M410,561L414,559M410,564L414,562M410,568L414,565M410,571L414,569M410,575L414,572M410,579L414,576M410,583L414,580M415,544L419,543M415,545L419,545M415,547L419,546M415,549L419,548M415,552L419,550M415,555L419,553M415,558L419,556M415,561L419,559M415,564L419,562M415,568L419,565M415,571L419,569M415,575L419,572M415,579L419,576M415,583L419,580M420,544L425,543M420,545L425,545M420,547L425,546M420,549L425,548M420,552L425,550M420,555L425,553M420,558L425,556M420,561L425,559M420,564L425,562M420,568L425,565M420,571L425,569M420,575L425,572M420,579L425,576M420,583L425,580M426,544L430,543M426,545L430,545M426,547L430,546M426,549L430,548M426,552L430,550M426,555L430,553M426,558L430,556M426,561L430,559M426,564L430,562M426,568L430,565M426,571L430,569M426,575L430,572M426,579L430,576M426,583L430,580M431,544L435,543M431,545L435,545M431,547L435,546M431,549L435,548M431,552L435,550M431,555L435,553M431,558L435,556M431,561L435,559M431,564L435,562M431,568L435,565M431,571L435,569M431,575L435,572M431,579L435,576M431,583L435,580M436,544L440,543M436,545L440,545M436,547L440,546M436,549L440,548M436,552L440,550M436,555L440,553M436,558L440,556M436,561L440,559M436,564L440,562M436,568L440,565M436,571L440,569M436,575L440,572M436,579L440,576M436,583L440,580M441,544L446,543M441,545L446,545M441,547L446,546M441,549L446,548M441,552L446,550M441,555L446,553M441,558L446,556M441,561L446,559M441,564L446,562M441,568L446,565M441,571L446,569M441,575L446,572M441,579L446,576M441,583L446,580" stroke="#000" stroke-width="0.8" fill="none"/>
</g>
<polygon points="334,543 352,543 361,584 334,584" fill="#000" opacity="0.75"/>
<path d="M333.4,533.4 Q333,531 336,530 L348,527.3 Q350.5,527 351.5,529.5 L367.4,578.5 L357,584 L340,545 Z" fill="#000"/>
<path d="M385,613h1v1h-1zM405,592h1v1h-1zM420,603h1v1h-1zM406,611h1v1h-1zM420,592h1v1h-1zM403,595h1v1h-1zM382,595h1v1h-1zM396,609h1v1h-1zM348,595h1v1h-1zM414,599h1v1h-1zM368,592h1v1h-1zM366,611h1v1h-1zM384,599h1v1h-1zM387,592h1v1h-1zM378,605h1v1h-1zM387,597h1v1h-1zM359,609h1v1h-1zM383,613h1v1h-1zM406,613h1v1h-1zM423,599h1v1h-1zM369,595h1v1h-1zM415,611h1v1h-1zM408,613h1v1h-1zM398,609h1v1h-1zM371,611h1v1h-1zM401,607h1v1h-1zM379,597h1v1h-1zM407,599h1v1h-1zM411,607h1v1h-1zM402,603h1v1h-1zM389,595h1v1h-1zM370,595h1v1h-1zM376,603h1v1h-1zM390,597h1v1h-1zM416,613h1v1h-1zM380,595h1v1h-1zM395,603h1v1h-1zM358,603h1v1h-1zM380,611h1v1h-1zM359,607h1v1h-1zM402,601h1v1h-1zM396,607h1v1h-1zM388,601h1v1h-1zM382,613h1v1h-1zM357,607h1v1h-1zM373,601h1v1h-1zM380,603h1v1h-1zM414,611h1v1h-1zM383,595h1v1h-1zM373,601h1v1h-1zM392,597h1v1h-1zM390,607h1v1h-1zM365,595h1v1h-1zM405,601h1v1h-1zM414,597h1v1h-1zM413,601h1v1h-1zM431,605h1v1h-1zM388,599h1v1h-1zM401,599h1v1h-1zM405,613h1v1h-1zM395,611h1v1h-1zM421,597h1v1h-1zM391,605h1v1h-1zM394,609h1v1h-1zM369,597h1v1h-1zM416,609h1v1h-1zM428,592h1v1h-1zM380,607h1v1h-1zM428,613h1v1h-1zM365,609h1v1h-1zM371,595h1v1h-1zM408,607h1v1h-1zM385,595h1v1h-1zM333,586h1v1h-1zM333,589h1v1h-1zM333,592h1v1h-1zM333,595h1v1h-1zM333,598h1v1h-1zM333,601h1v1h-1zM333,604h1v1h-1zM333,607h1v1h-1zM333,610h1v1h-1zM333,613h1v1h-1zM333,616h1v1h-1z" fill="#4a4e54" shape-rendering="crispEdges"/>
<polygon points="339.3,626 347.6,626 341.2,659.6 335.4,659.6" fill="#000"/>
<polygon points="435.3,626 443,626 447,659.6 441.1,659.6" fill="#000"/>
<rect x="1068" y="588" width="12" height="136" rx="1" fill="#000"/>
<rect x="1220" y="588" width="12" height="136" rx="1" fill="#000"/>
<path d="M1092,574 L1208,574 Q1216,574 1216,582 L1214.5,620 L1216,656 Q1216,661 1211,663 L1089,663 Q1084,661 1084,656 L1085.5,620 L1084,582 Q1084,574 1092,574 Z" fill="#000"/>
<path d="M1086,662 L1215,662 Q1221,662 1221,668 L1221,725.5 L1080,725.5 L1080,668 Q1080,662 1086,662 Z" fill="#000"/>
<rect x="1089" y="668" width="121" height="51" fill="url(#meshDots2)"/>
<path d="M1150,669V719" stroke="#43974a" stroke-width="1.5" stroke-dasharray="1 2" opacity="0.8"/>
<rect x="1080" y="590" width="4" height="1.5" fill="#000"/><rect x="1216" y="590" width="4" height="1.5" fill="#000"/>
<path d="M1080,592 L1084.5,597 M1220,592 L1215.5,597" stroke="#000" stroke-width="0.8"/>
<polygon points="1080.3,724 1095,725 1082.8,774.4 1076.3,774.4" fill="#000"/>
<polygon points="1205.6,725 1220,724 1223.7,774.4 1217.2,774.4" fill="#000"/>
<rect x="30" y="341" width="1" height="31" fill="#585858"/>
<rect x="30" y="371" width="30" height="1" fill="#585858"/>
<rect x="30" y="758" width="1" height="31" fill="#585858"/>
<rect x="30" y="788" width="30" height="1" fill="#585858"/>
<rect x="808" y="758" width="1" height="31" fill="#585858"/>
<rect x="808" y="788" width="30" height="1" fill="#585858"/>
<line x1="808.5" y1="345" x2="808.5" y2="371" stroke="#585858" stroke-width="1.1"/>
<line x1="808.5" y1="371" x2="834.5" y2="378.6" stroke="#585858" stroke-width="1.1"/>
<line x1="808.5" y1="371" x2="822.8" y2="358.3" stroke="#585858" stroke-width="1.1"/>
</svg>

<div class="lab" style="left:0;top:-7px;width:77px;padding-left:1.2px">Superiore<span class="sp" style="left:66px"></span><span class="tri" style="left:68px"></span></div>
<div class="lab" style="left:772px;top:-7px;width:91px;padding-left:8.8px">Prospettica<span class="sp" style="left:80px"></span><span class="tri" style="left:82px"></span></div>
<div class="lab" style="left:0;top:411px;width:69px;padding-left:2.4px">Frontale<span class="sp" style="left:58px"></span><span class="tri" style="left:60px"></span></div>
<div class="lab act" style="left:772px;top:411px;width:63px;padding-left:8.4px">Destra<span class="sp" style="left:52px"></span><span class="tri" style="left:54px"></span></div>
<div class="ax" style="left:33px;top:329px">y</div>
<div class="ax" style="left:63px;top:360px">x</div>
<div class="ax" style="left:33px;top:747px">z</div>
<div class="ax" style="left:63px;top:777px">x</div>
<div class="ax" style="left:811px;top:747px">z</div>
<div class="ax" style="left:841px;top:775.5px">y</div>
<div class="ax" style="left:811px;top:334px">z</div>
<div class="ax" style="left:825.5px;top:346px">y</div>
<div class="ax" style="left:837px;top:368px">x</div>

</body></html>
